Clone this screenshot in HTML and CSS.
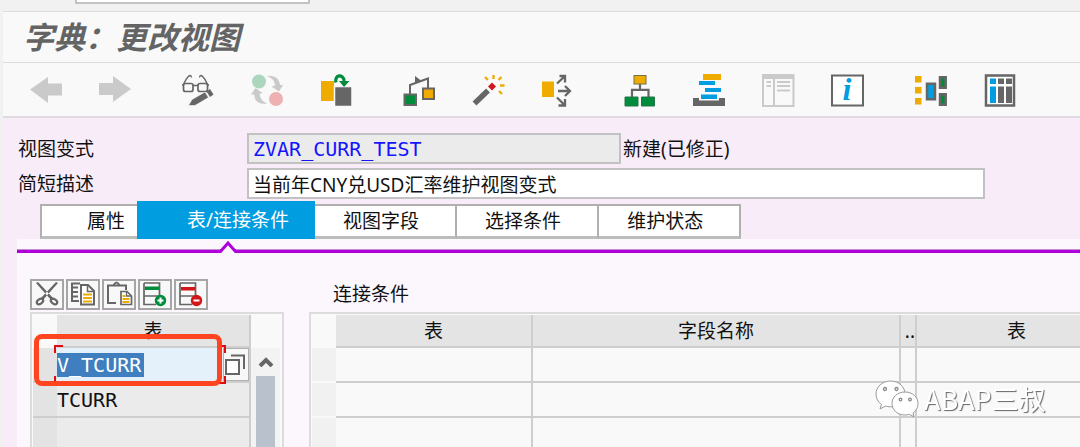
FILE: index.html
```
<!DOCTYPE html>
<html lang="zh-CN">
<head>
    <meta charset="UTF-8">
    <meta name="viewport" content="width=device-width, initial-scale=1.0">
    <title>字典：更改视图</title>
    <link rel="stylesheet" href="styles.css">
</head>
<body>
    <div class="window">
        <div class="command-bar">
            <input class="command" type="text" aria-label="命令">
        </div>

        <header class="title-bar">
            <h1>字典：更改视图</h1>
        </header>

        <nav class="toolbar">
            <div class="tool-group">
                <button class="tool" aria-label="后退" disabled>
                    <svg viewBox="0 0 34 34"><path fill="#cacaca" d="M1 16.500L19 4v6.500h14v12H19V30z"/></svg>
                </button>
                <button class="tool" aria-label="前进" disabled>
                    <svg viewBox="0 0 34 34"><path fill="#cacaca" d="M1 10h14V3l18 13-18 13v-7H1z"/></svg>
                </button>
            </div>
            <div class="tool-group">
                <button class="tool" aria-label="显示/更改">
                    <svg viewBox="0 0 34 34">
                        <g fill="none" stroke="#666" stroke-width="1.700">
                            <rect x="2.500" y="10.500" width="9.500" height="8" rx="2"/>
                            <rect x="17" y="10.500" width="9.500" height="8" rx="2"/>
                            <path d="M12 12.500h5M1 12h2M26 12h2"/>
                            <path stroke-width="1.300" d="M2 12C4 9 6 3 9 2.500q1.500 0 1.500 2M27 12C25 9 23 3 20 2.500q-1.500 0-1.500 2"/>
                        </g>
                        <path fill="#666" stroke="#f9f9f9" stroke-width=".6" d="M7.500 32.500l3.500-6 13-7.500 3.500 5.500L14 32.500z"/>
                        <path fill="#666" d="M25.500 18.500l3.500-2.500 3.500 5.500-3.500 2.500z"/>
                    </svg>
                </button>
                <button class="tool" aria-label="激活/未激活" disabled>
                    <svg viewBox="0 0 34 34">
                        <circle cx="9" cy="8.500" r="7" fill="#acd6bd"/>
                        <circle cx="26" cy="26" r="7" fill="#eeb1b1"/>
                        <path fill="#cacaca" d="M17 3c8-1 12.500 3 13 9h3l-4 6.500-7.500-5 3.500-1C25 8 22 5 17 3zM17 30.500C9 31.500 4 28 4.500 21.500H1l4.500-6.500 7 5-3 1C10 25.500 12.500 28.500 17 30.500z"/>
                    </svg>
                </button>
                <button class="tool" aria-label="其他对象">
                    <svg viewBox="0 0 34 34">
                        <path fill="#f0ab00" d="M2 8h16v20H2z"/>
                        <path fill="#666" stroke="#f9f9f9" stroke-width="1.500" d="M15.500 13.500h17.500v20H15.500z"/>
                        <path fill="#f9f9f9" d="M15 7h6v6h-6z"/>
                        <path fill="none" stroke="#008c3a" stroke-width="3.200" d="M17 9.500C15 2 24 0 25.200 8"/>
                        <path fill="#008c3a" d="M20 8h10.500l-5.500 6z"/>
                    </svg>
                </button>
            </div>
            <div class="tool-group">
                <button class="tool" aria-label="使用处清单">
                    <svg viewBox="0 0 34 34">
                        <path fill="none" stroke="#666" stroke-width="2" d="M8 21v-9l18-6.500V15"/>
                        <path fill="#666" d="M13 3v7l6-2.500z"/>
                        <rect x="2.500" y="21.500" width="11.500" height="10.500" fill="#008c3a" stroke="#666" stroke-width="2"/>
                        <rect x="21" y="15.500" width="11" height="10.500" fill="#f0ab00" stroke="#666" stroke-width="2"/>
                    </svg>
                </button>
                <button class="tool" aria-label="激活">
                    <svg viewBox="0 0 34 34">
                        <path stroke="#666" stroke-width="5.500" d="M3.500 30.500L17 17.500"/>
                        <path fill="#d0181b" d="M21 9.500l4 4-4 4-4-4z"/>
                        <path stroke="#f0ab00" stroke-width="2.300" d="M22.500 2v4M14 4l3 3M30.500 4l-3 3M29 12.500h4.500M28 18l3 3"/>
                    </svg>
                </button>
                <button class="tool" aria-label="输出">
                    <svg viewBox="0 0 34 34">
                        <path fill="#f0ab00" d="M2 8.500h12V24H2z"/>
                        <g fill="none" stroke="#666" stroke-width="2.300">
                            <path d="M17 10.500L25 3M19.500 3H25v6.500"/>
                            <path d="M18 18h11M25 13l5 5-5 5"/>
                            <path d="M17 24.500l8 8M25 26v6.500h-6.500"/>
                        </g>
                    </svg>
                </button>
            </div>
            <div class="tool-group">
                <button class="tool" aria-label="层次结构">
                    <svg viewBox="0 0 34 34">
                        <path fill="none" stroke="#666" stroke-width="2.200" d="M17 11v6M9 24v-7.200h16.500V24"/>
                        <rect x="11" y="2.500" width="12" height="8.500" fill="#f0ab00" stroke="#77704f" stroke-width="1"/>
                        <path fill="#008c3a" stroke="#27744a" d="M2 24h13v9H2zM18.500 24h13v9h-13z"/>
                    </svg>
                </button>
                <button class="tool" aria-label="对象清单">
                    <svg viewBox="0 0 34 34">
                        <path fill="#f0ab00" d="M11 1h18v6H11z"/>
                        <path fill="#009de0" d="M7 8h16v4H7zM13 15h16v4H13zM9 21.500h16V26H9z"/>
                        <path fill="#666" d="M1 25h6v2.500h20V25h6v8H1z"/>
                    </svg>
                </button>
                <button class="tool" aria-label="导航窗口" disabled>
                    <svg viewBox="0 0 34 34">
                        <path fill="none" stroke="#cacaca" stroke-width="2" d="M2 2h30.500v31H2z"/>
                        <path fill="#cacaca" d="M1 1h32v5H1zM12 5h2v28h-2zM5.500 8H10v2H5.500zM5.500 12H10v2H5.500zM16 8h13v2H16zM16 12h13v2H16zM16 16.500h13v2H16z"/>
                    </svg>
                </button>
                <button class="tool" aria-label="帮助">
                    <svg viewBox="0 0 34 34">
                        <path fill="#fff" stroke="#666" stroke-width="2" d="M2 2.500h31v30H2z"/>
                        <text class="info-letter" x="17" y="27" text-anchor="middle">i</text>
                    </svg>
                </button>
            </div>
            <div class="tool-group">
                <button class="tool" aria-label="关系">
                    <svg viewBox="0 0 34 34">
                        <path fill="#f0ab00" d="M2 3h6.500v6.500H2zM2 14h6.500v6.500H2zM2 25h6.500v6.500H2z"/>
                        <path fill="#009de0" stroke="#666" stroke-width="2.500" d="M14 10.700h8v15.500h-8z"/>
                        <path fill="#008c3a" stroke="#666" stroke-width="2.500" d="M27 4.200h5.700v10.600H27zM27 21.200h5.700v10.600H27z"/>
                    </svg>
                </button>
                <button class="tool" aria-label="目录">
                    <svg viewBox="0 0 34 34">
                        <path fill="#fff" stroke="#666" stroke-width="2.500" d="M4 2.500h28v30H4z"/>
                        <path fill="#009de0" d="M8 5.500h6V11H8zM8 13.500h6V30H8z"/>
                        <path fill="#666" d="M16 5.500h6V11h-6zM16 13.500h6V30h-6zM24 5.500h6V11h-6zM24 13.500h6V30h-6z"/>
                    </svg>
                </button>
            </div>
        </nav>

        <main>
            <form class="fields">
                <div class="field-row">
                    <label for="variant">视图变式</label>
                    <input id="variant" class="field variant" type="text" value="ZVAR_CURR_TEST" readonly>
                    <span>新建(已修正)</span>
                </div>
                <div class="field-row">
                    <label for="description">简短描述</label>
                    <input id="description" class="field description" type="text" value="当前年CNY兑USD汇率维护视图变式">
                </div>
            </form>

            <div class="tabs" role="tablist">
                <button class="tab first" role="tab">属性</button>
                <button class="tab active" role="tab" aria-selected="true">表/连接条件</button>
                <button class="tab" role="tab">视图字段</button>
                <button class="tab" role="tab">选择条件</button>
                <button class="tab" role="tab">维护状态</button>
            </div>

            <section class="tab-page">
                <div class="tab-line">
                    <svg class="tab-caret" viewBox="0 0 24 13">
                        <path fill="#fbf7fd" d="M3 13l9-10 9 10z"/>
                        <path fill="none" stroke="#b000da" stroke-width="3" d="M0 11.500h4.500L12 3l7.500 8.500H24"/>
                    </svg>
                </div>

                <div class="panes">
                    <div class="left-pane">
                        <div class="edit-bar">
                            <button class="edit" aria-label="剪切">
                                <svg viewBox="0 0 30 27">
                                    <path fill="#666" d="M4 2l2-1L22 18l-3 1zM26 2l-2-1L8 18l3 1z"/>
                                    <g fill="none" stroke="#666" stroke-width="2.200">
                                        <ellipse cx="8" cy="20.500" rx="3.500" ry="2.300" transform="rotate(-35 8 20.500)"/>
                                        <ellipse cx="22" cy="20.500" rx="3.500" ry="2.300" transform="rotate(35 22 20.500)"/>
                                    </g>
                                </svg>
                            </button>
                            <button class="edit" aria-label="复制">
                                <svg viewBox="0 0 30 27">
                                    <path fill="none" stroke="#666" stroke-width="2" d="M12 2.500H4v17.500h7M5 6.500h5M5 11h5M5 15.500h5"/>
                                    <path fill="#fff" stroke="#666" stroke-width="2" d="M13 4h7l6 6v13.500H13z"/>
                                    <path fill="none" stroke="#666" stroke-width="1.500" d="M19.500 4v6.500H26"/>
                                    <path stroke="#f0ab00" stroke-width="2" d="M15 13.500h9M15 17h9M15 20.500h9"/>
                                </svg>
                            </button>
                            <button class="edit" aria-label="粘贴">
                                <svg viewBox="0 0 30 27">
                                    <path fill="none" stroke="#666" stroke-width="2" d="M22 9V4.500H4V22h8"/>
                                    <path fill="none" stroke="#666" stroke-width="2" d="M9.500 4.500q3-6 6 0"/>
                                    <path fill="#fff" stroke="#666" stroke-width="1.700" d="M17 10.500h6l4.500 4.500v8.500H17z"/>
                                    <path fill="none" stroke="#666" stroke-width="1.300" d="M22.500 10.500V15h5"/>
                                    <path stroke="#f0ab00" stroke-width="2" d="M18.500 18h7M18.500 21h7M18.500 15h3"/>
                                </svg>
                            </button>
                            <button class="edit" aria-label="插入行">
                                <svg viewBox="0 0 30 27">
                                    <path fill="none" stroke="#666" stroke-width="1.700" d="M4 2h15.500v13M4 2v21.500h12M4 15h15"/>
                                    <path fill="#008c3a" d="M5 5.500h14V9H5z"/>
                                    <circle cx="20.500" cy="19.500" r="5.700" fill="#008c3a"/>
                                    <path stroke="#fff" stroke-width="2" d="M17.500 19.500h6M20.500 16.500v6"/>
                                </svg>
                            </button>
                            <button class="edit" aria-label="删除行">
                                <svg viewBox="0 0 30 27">
                                    <path fill="none" stroke="#666" stroke-width="1.700" d="M4 2h15.500v13M4 2v21.500h12M4 15h15"/>
                                    <path fill="#d0181b" d="M5 6h14v3.500H5z"/>
                                    <circle cx="20.500" cy="19.500" r="5.700" fill="#d0181b"/>
                                    <path stroke="#fff" stroke-width="2" d="M17.500 19.500h6"/>
                                </svg>
                            </button>
                        </div>

                        <div class="grid-box left-box">
                            <table class="grid names">
                                <colgroup><col class="col-select"><col></colgroup>
                                <thead>
                                    <tr><td class="corner"></td><th>表</th></tr>
                                </thead>
                                <tbody>
                                    <tr>
                                        <td class="select"></td>
                                        <td class="current">
                                            <div class="cell-edit">
                                                <input class="table-name marked" type="text" aria-label="表 1" value="V_TCURR">
                                                <button class="search-help" aria-label="搜索帮助">
                                                    <svg viewBox="0 0 24 27">
                                                        <path fill="#fff" stroke="#666" stroke-width="2" d="M2 9h13v14H2z"/>
                                                        <path fill="none" stroke="#666" stroke-width="2" d="M7 4.500h13V18"/>
                                                    </svg>
                                                </button>
                                                <svg class="focus-marks" viewBox="0 0 172 39">
                                                    <path fill="none" stroke="#e00b12" stroke-width="2" d="M9 1H1v7M163 1h8v7M1 31v7h8M171 31v7h-8"/>
                                                </svg>
                                            </div>
                                        </td>
                                    </tr>
                                    <tr>
                                        <td class="select"></td>
                                        <td><input class="table-name" type="text" aria-label="表 2" value="TCURR"></td>
                                    </tr>
                                    <tr><td class="select"></td><td></td></tr>
                                </tbody>
                            </table>
                            <div class="scroll">
                                <button class="scroll-up" aria-label="向上滚动">
                                    <svg viewBox="0 0 16 10"><path fill="none" stroke="#666" stroke-width="4" d="M2 9l6-6 6 6"/></svg>
                                </button>
                                <div class="scroll-thumb"></div>
                            </div>
                            <div class="callout"></div>
                        </div>
                    </div>

                    <div class="right-pane">
                        <h2>连接条件</h2>
                        <div class="grid-box">
                            <table class="grid joins">
                                <colgroup><col class="col-select"><col class="col-table"><col class="col-field"><col class="col-op"><col class="col-right"></colgroup>
                                <thead>
                                    <tr><td class="corner"></td><th>表</th><th>字段名称</th><th class="op">..</th><th>表</th></tr>
                                </thead>
                                <tbody>
                                    <tr><td class="select"></td><td></td><td></td><td></td><td></td></tr>
                                    <tr><td class="select"></td><td></td><td></td><td></td><td></td></tr>
                                    <tr><td class="select"></td><td></td><td></td><td></td><td></td></tr>
                                </tbody>
                            </table>
                        </div>
                    </div>
                </div>
            </section>
        </main>
    </div>

    <div class="watermark">
        <svg viewBox="0 0 44 38">
            <g fill="#fff" stroke="#999" stroke-width="1">
                <path d="M15.500 1C7 1 1 7 1 14c0 4.500 2 8 5.500 10.500L5 29l5.500-3c1.500.5 3 .8 5 .8C24 26.800 30 21 30 14S24 1 15.500 1z"/>
                <path d="M30 12c-7.500 0-13 5-13 11.500S22.500 35 30 35c1.500 0 3-.3 4.500-.7L39 37l-1-4c3-2 5-5.500 5-9.500C43 17 37.500 12 30 12z"/>
            </g>
            <g fill="none" stroke="#888" stroke-width="1.300">
                <circle cx="10" cy="9" r="1.500"/><circle cx="21.500" cy="9" r="1.500"/>
                <circle cx="25.500" cy="19.500" r="1.300"/><circle cx="35" cy="19.500" r="1.300"/>
            </g>
        </svg>
        <span>ABAP三叔</span>
    </div>
</body>
</html>
```
FILE: styles.css
```
* {
    box-sizing: border-box;
    margin: 0;
    padding: 0;
}

body {
    position: relative;
    height: 100vh;
    overflow: hidden;
    background-color: #f1f1f1;
    color: #111;
    font-family: "Noto Sans", "Noto Sans CJK SC", sans-serif;
    font-size: 19px;
    line-height: 28px;
}

button, input {
    font: inherit;
    color: inherit;
    border: none;
    border-radius: 0;
    background: none;
}

svg {
    display: block;
}

.window {
    display: flex;
    flex-direction: column;
    height: 100%;
    padding-left: 3px;
}

.command-bar {
    flex: none;
    height: 11px;
    padding-left: 72px;
}

.command {
    display: block;
    width: 235px;
    height: 4px;
    background-color: #fff;
    border: 2px solid #c2c2c2;
    border-top: none;
}

.title-bar {
    flex: none;
    height: 51px;
    padding: 2px 20px;
    background-color: #f9f9f9;
    border-top: 1px solid #dcdcdc;
}

.title-bar h1 {
    font-family: "Noto Sans CJK SC", sans-serif;
    font-size: 31px;
    line-height: 44px;
    font-style: italic;
    font-weight: bold;
    color: #646464;
}

/* TOOLBAR */
.toolbar {
    display: flex;
    flex: none;
    align-items: center;
    gap: 49px;
    height: 56px;
    padding-left: 26px;
    background-color: #f9f9f9;
    border-top: 1px solid #dcdcdc;
    border-bottom: 2px solid #dfdbe0;
}

.tool-group {
    display: flex;
    gap: 35px;
}

.tool, .tool svg {
    width: 34px;
    height: 34px;
}

.info-letter {
    font-family: "Liberation Serif", serif;
    font-size: 32px;
    line-height: 32px;
    font-style: italic;
    font-weight: bold;
    fill: #009de0;
}

main {
    display: flex;
    flex-direction: column;
    flex: 1;
    min-height: 0;
    background-color: #f8ecf9;
}

/* FIELDS */
.fields {
    display: flex;
    flex-direction: column;
    gap: 4px;
    padding: 15px 15px 2px;
}

.field-row {
    display: flex;
    align-items: center;
}

.field-row label {
    width: 229px;
}

.field {
    height: 31px;
    padding: 0 4px;
    border: 2px solid #c2c2c2;
    background-color: #fff;
}

.variant {
    width: 374px;
    margin-right: 2px;
    background-color: #ebebeb;
    color: #1414ff;
    font-family: "DejaVu Sans Mono", monospace;
    font-size: 20px;
}

.description {
    width: 738px;
}

/* TABS */
.tabs {
    display: flex;
    align-items: flex-end;
    padding-left: 37px;
}

.tab {
    height: 35px;
    padding: 0 36px 0 28px;
    background-color: #fff;
    border: 2px solid #b0b0b0;
    border-bottom: 3px solid #bcbcbc;
    border-left: none;
    white-space: nowrap;
}

.tab.first {
    padding: 0 12px 0 45px;
    border-left: 2px solid #b0b0b0;
    border-right: none;
}

.tab.active {
    height: 38px;
    padding: 0 26px 0 50px;
    background-color: #009de0;
    border: none;
    color: #fff;
}

.tab-page {
    display: flex;
    flex-direction: column;
    flex: 1;
    min-height: 0;
    margin-left: 14px;
    padding-top: 10px;
    background-color: #fbf7fd;
}

.tab-line {
    position: relative;
    flex: none;
    height: 4px;
    background-color: #b000da;
    border-top: 1px solid #c78ad6;
}

.tab-caret {
    position: absolute;
    left: 199px;
    bottom: 0;
    width: 24px;
    height: 13px;
}

.panes {
    display: flex;
    flex: 1;
    gap: 25px;
    min-height: 0;
    padding: 26px 0 0 13px;
}

.left-pane, .right-pane {
    display: flex;
    flex-direction: column;
    gap: 2px;
}

.left-pane {
    flex: none;
    width: 254px;
}

.right-pane {
    flex: 1;
    min-width: 0;
}

.right-pane h2 {
    height: 31px;
    padding-left: 24px;
    font-size: 19px;
    line-height: 30px;
    font-weight: normal;
}

.edit-bar {
    display: flex;
    gap: 2px;
}

.edit {
    width: 34px;
    height: 31px;
    border: 2px solid #a6a6a6;
    background-color: #f8f8f8;
}

.edit svg {
    width: 30px;
    height: 27px;
}

/* GRIDS */
.grid-box {
    flex: 1;
    min-height: 0;
    overflow: hidden;
    padding: 1px 0 0 1px;
    border: 2px solid #dcdcdc;
    border-bottom: none;
    background-color: #f9f9f9;
}

.right-pane .grid-box {
    border-right: none;
}

.left-box {
    position: relative;
    display: flex;
}

.grid {
    table-layout: fixed;
    border-collapse: separate;
    border-spacing: 0;
}

.grid th, .grid td {
    height: 35px;
    border-right: 2px solid #cecece;
    border-bottom: 2px solid #cecece;
}

.grid th {
    height: 33px;
    background-color: #e4e4e4;
    font-weight: normal;
    line-height: 28px;
    text-align: center;
}

.grid .corner {
    height: 33px;
    border: none;
}

.grid .select {
    border-right: none;
    border-bottom-color: #f9f9f9;
    background-color: #f1f1f1;
}

.col-select {
    width: 24px;
}

.names {
    width: 218px;
    height: max-content;
    flex: none;
}

.names td {
    background-color: #ebebeb;
}

.names .corner {
    background-color: #f9f9f9;
}

.names .select {
    background-color: #e3e3e3;
    border-bottom-color: #cecece;
}

.names .current {
    background-color: #e4f1fa;
}

.cell-edit {
    position: relative;
    display: flex;
    align-items: center;
    justify-content: space-between;
    height: 33px;
}

.table-name {
    display: block;
    width: 180px;
    height: 24px;
    font-family: "DejaVu Sans Mono", monospace;
    font-size: 20px;
}

.table-name.marked {
    width: 87px;
    background-color: #3f7fbf;
    color: #fff;
}

.search-help {
    width: 26px;
    height: 33px;
    border: 1px solid #b0b0b0;
    background-color: #f8f8f8;
}

.search-help svg {
    width: 24px;
    height: 27px;
}

.focus-marks {
    position: absolute;
    left: -3px;
    top: -3px;
    width: 172px;
    height: 39px;
}

.scroll {
    display: flex;
    flex-direction: column;
    align-items: center;
    flex: 1;
    margin: 33px 2px 0 0;
    background-color: #f3f3f3;
}

.scroll-up {
    flex: none;
    height: 28px;
}

.scroll-up svg {
    width: 16px;
    height: 10px;
}

.scroll-thumb {
    flex: 1;
    width: 19px;
    background-color: #b8c1cc;
}

/* red frame over the first table row */
.callout {
    position: absolute;
    left: 2px;
    top: 20px;
    width: 188px;
    height: 52px;
    border: 5px solid #ff4520;
    border-radius: 8px;
}

.joins {
    width: 806px;
}

.col-table {
    width: 197px;
}

.col-field {
    width: 368px;
}

.col-op {
    width: 16px;
}

.grid .op {
    text-align: right;
}

.watermark {
    position: absolute;
    right: 34px;
    bottom: 29px;
    display: flex;
    align-items: center;
    gap: 5px;
    color: #fff;
    font-family: "Noto Sans CJK SC", sans-serif;
    font-size: 27px;
    line-height: 38px;
    text-shadow: 1px 1px 1px #666;
    will-change: transform;
}

.watermark svg {
    width: 44px;
    height: 38px;
}
```
